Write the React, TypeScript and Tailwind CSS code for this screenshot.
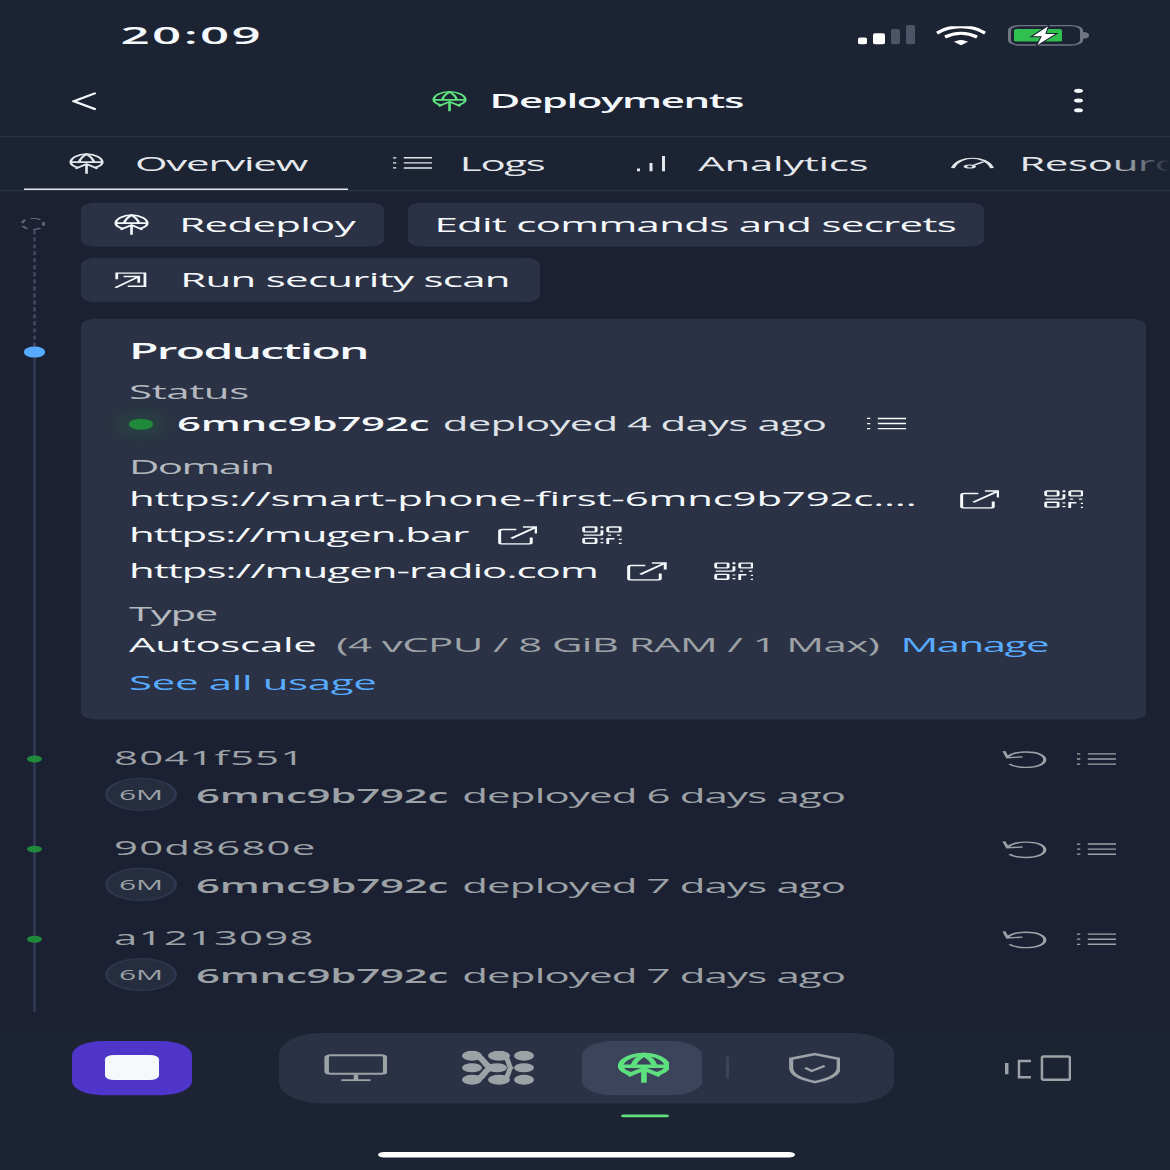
import type { ReactNode } from "react";

// The screenshot is a 390x844 phone capture squeezed into a square, so the page
// is laid out at phone size and stretched as a whole.

function Svg({ className, strokeWidth = 1.8, children }: { className: string; strokeWidth?: number; children: ReactNode }) {
  return (
    <svg viewBox="0 0 24 24" preserveAspectRatio="none" fill="none" stroke="currentColor" strokeWidth={strokeWidth} className={`shrink-0 ${className}`}>
      {children}
    </svg>
  );
}

function DeployIcon({ className, strokeWidth }: { className: string; strokeWidth?: number }) {
  return (
    <Svg className={className} strokeWidth={strokeWidth}>
      <path d="M6.500 16.500C3 15 1.200 13 1.200 10.500 1.200 6 6 1.800 12 1.800s10.800 4.200 10.800 8.700c0 2.500-1.800 4.500-5.300 6" />
      <path d="M1.500 10.500h21M7 10.500C7.500 7 9.500 4 12 1.800c2.500 2.200 4.500 5.200 5 8.700" />
      <path d="M12 23V12M4.500 17.500L12 12.500l7.500 5" />
    </Svg>
  );
}

function ListIcon({ className }: { className: string }) {
  return (
    <Svg className={className}>
      <path d="M6.500 4h17M6.500 12h17M6.500 20h17" strokeWidth={2.200} />
      <path d="M1 3v2M1 11v2M1 19v2" strokeWidth={2} />
    </Svg>
  );
}

function BarsIcon({ className }: { className: string }) {
  return (
    <Svg className={className}>
      <path d="M2 19v4M12 11v12M22 1v22" strokeWidth={2.400} />
    </Svg>
  );
}

function GaugeIcon({ className }: { className: string }) {
  return (
    <Svg className={className}>
      <path d="M1 22C3 8 8 3 12 3s9 5 11 19" strokeWidth={2.200} />
      <ellipse cx="10.500" cy="19" rx="2.500" ry="3" strokeWidth={2} />
      <path d="M13 16l5-6" strokeWidth={2} />
    </Svg>
  );
}

function ScanIcon({ className }: { className: string }) {
  return (
    <Svg className={className} strokeWidth={2}>
      <path d="M2 11V2h20.500v19H10" />
      <path d="M1 23L17 8M7 7h11v9" />
    </Svg>
  );
}

function ExternalIcon({ className }: { className: string }) {
  return (
    <Svg className={className}>
      <path d="M11 5H2.500A1.500 1.500 0 0 0 1 6.500v15A1.500 1.500 0 0 0 2.500 23h16a1.500 1.500 0 0 0 1.500-1.500V15" />
      <path d="M8 16L23 2M15 2h8v8" />
    </Svg>
  );
}

function QrIcon({ className }: { className: string }) {
  return (
    <Svg className={className} strokeWidth={1.700}>
      <rect x="1" y="2" width="7.500" height="6" rx="1" />
      <rect x="15.500" y="2" width="7.500" height="6" rx="1" />
      <rect x="1" y="16" width="7.500" height="6" rx="1" />
      <path d="M12 1v2.500M12 6v4.500c0 1-.5 1.500-1.500 1.500H1M15.500 12h2M21 12h2M12 16v1.500M12 20.500V22M15.500 23v-6.500h4M23 16.500v1.500M23 21.500V23" />
    </Svg>
  );
}

function RollbackIcon({ className }: { className: string }) {
  return (
    <Svg className={className} strokeWidth={1.700}>
      <path d="M3 9C5 4 9 2.500 13 2.500c6 0 10 4 10 9.500s-4 9.500-10 9.500c-4 0-7-1.500-9-4" />
      <path d="M1 1.500L3 9.500l8-1" />
    </Svg>
  );
}

function ShieldIcon({ className }: { className: string }) {
  return (
    <Svg className={className}>
      <path d="M12 1.500L23 5v7c0 6-5 9-11 11C6 21 1 18 1 12V5z" strokeWidth={1.900} />
      <path d="M7.500 12l3 2.500 6-4" strokeWidth={1.600} />
    </Svg>
  );
}

function MonitorIcon({ className }: { className: string }) {
  return (
    <Svg className={className}>
      <rect x="1" y="1.500" width="22" height="16" rx="1.500" strokeWidth={1.700} />
      <path d="M12 18v5M6.500 23h11" strokeWidth={1.700} />
    </Svg>
  );
}

function MeshIcon({ className }: { className: string }) {
  return (
    <svg viewBox="0 0 72 34" preserveAspectRatio="none" className={`shrink-0 ${className}`}>
      <g fill="#9da2a6">
        <ellipse cx="10" cy="5" rx="10" ry="5" />
        <ellipse cx="37" cy="5" rx="11" ry="5" />
        <ellipse cx="62" cy="5" rx="10" ry="5" />
        <ellipse cx="10" cy="17" rx="10" ry="4.500" />
        <ellipse cx="35" cy="17" rx="10" ry="4.500" />
        <ellipse cx="62" cy="17" rx="10" ry="4.500" />
        <ellipse cx="10" cy="29" rx="10" ry="5" />
        <ellipse cx="37" cy="29" rx="11" ry="5" />
        <ellipse cx="62" cy="29" rx="10" ry="5" />
      </g>
      <g fill="none" stroke="#9da2a6">
        <path d="M14 5.500C22 6 21 14 29 17 21 20 22 28 14 28.500" strokeWidth={6} />
        <path d="M41 5.500C47 6 46 14 48.500 17 46 20 47 28 41 28.500" strokeWidth={5} />
      </g>
    </svg>
  );
}

function Tab({ width, icon, label, tracking }: { width: string; icon: ReactNode; label: string; tracking: string }) {
  return (
    <div className={`flex h-full shrink-0 items-center pl-[15px] ${width}`}>
      {icon}
      <span className={`whitespace-nowrap ${tracking}`}>{label}</span>
    </div>
  );
}

function ActionButton({ width, icon, label }: { width: string; icon?: ReactNode; label: string }) {
  return (
    <div className={`flex h-[32px] items-center rounded-[5px] bg-[#2b3245] text-[14px] tracking-[-0.24px] text-[#f5f9fc] ${width} ${icon ? "pl-[11.300px]" : "pl-[8.800px]"}`}>
      {icon}
      <span className="whitespace-nowrap">{label}</span>
    </div>
  );
}

function UrlRow({ url, gap, tracking }: { url: string; gap: string; tracking: string }) {
  return (
    <div className="flex h-[26px] items-center text-[#f5f9fc]">
      <span className={`whitespace-nowrap text-[14px] ${tracking}`}>{url}</span>
      <ExternalIcon className={`h-[14px] w-[13.300px] ${gap}`} />
      <QrIcon className="ml-[15px] h-[14px] w-[13.300px]" />
    </div>
  );
}

function Deployment({ hash, age }: { hash: string; age: string }) {
  return (
    <div className="relative flex h-[65px] justify-between pt-[7px] pr-[9.700px] text-[#9da2a6]">
      <div className="absolute top-[16px] left-[-18.200px] h-[4.300px] w-[5px] rounded-full bg-[#1f8a3a]" />
      <div className="pl-[8px]">
        <div className="flex h-[20px] items-center pl-[3px] text-[14px] tracking-[0.38px]">{hash}</div>
        <div className="mt-[4.600px] flex h-[24.400px] items-center">
          <div className="flex h-full w-[24px] items-center justify-center rounded-full border border-[#2f3750] bg-[#262d3f] text-[10px]">6M</div>
          <div className="ml-[6.300px] flex text-[14px] whitespace-nowrap">
            <span className="font-semibold tracking-[-0.08px]">6mnc9b792c</span>
            <span className="ml-[4.700px] tracking-[-0.29px]">deployed {age} days ago</span>
          </div>
        </div>
      </div>
      <div className="flex h-[23px] items-center gap-[10.400px]">
        <RollbackIcon className="h-[14px] w-[14.900px]" />
        <ListIcon className="h-[11px] w-[13.300px]" />
      </div>
    </div>
  );
}

export default function App() {
  return (
    <div className="h-[1170px] w-[1170px] overflow-hidden bg-[#1c2333]">
      <div className="flex h-[844px] w-[390px] origin-top-left scale-x-[3] scale-y-[1.3863] flex-col font-['Open_Sans',sans-serif] text-[#f5f9fc]">
        {/* status bar */}
        <div className="flex h-[47.500px] shrink-0 items-center pt-[3.600px]">
          <span className="ml-[40.200px] w-[50px] text-[17px] font-semibold tracking-[0.8px]">20:09</span>
          <div className="ml-[195.800px] flex items-end gap-[2px] pb-[1px]">
            <div className="h-[5.500px] w-[3.300px] rounded-[1px] bg-white" />
            <div className="h-[8.500px] w-[3.300px] rounded-[1px] bg-white" />
            <div className="h-[11px] w-[3.300px] rounded-[1px] bg-[#4c5468]" />
            <div className="h-[14px] w-[3.300px] rounded-[1px] bg-[#4c5468]" />
          </div>
          <svg viewBox="0 0 50 20" preserveAspectRatio="none" fill="none" stroke="white" className="ml-[7.200px] h-[14px] w-[16.700px] shrink-0">
            <path d="M1 7C15-2 35-2 49 7" strokeWidth={3.500} />
            <path d="M9 11c10-5 22-5 32 0" strokeWidth={3.500} />
            <path d="M19 16l6 3 6-3c-4-2-8-2-12 0z" fill="white" strokeWidth={1} />
          </svg>
          <div className="relative ml-[6.900px] h-[14.500px] w-[25px] shrink-0 rounded-[4px] border border-[#6f7583] p-[1.500px]">
            <div className="h-full w-[15.500px] rounded-[1px] bg-[#30c04f]" />
            <svg viewBox="0 0 30 20" preserveAspectRatio="none" className="absolute top-[-1px] left-[6.500px] h-[15.500px] w-[10px]">
              <path d="M20 0L2 11h10l-5 9 21-12H17z" fill="white" stroke="#1c2333" strokeWidth={1} />
            </svg>
            <div className="absolute top-[3.500px] left-[24.500px] h-[5px] w-[1.200px] rounded-r-full bg-[#6f7583]" />
          </div>
        </div>

        {/* title bar */}
        <div className="flex h-[51px] shrink-0 items-center border-b border-[#2b3245]">
          <svg viewBox="0 0 8 14" preserveAspectRatio="none" fill="none" stroke="#f5f9fc" strokeWidth={1.300} className="ml-[24px] h-[14px] w-[8px] shrink-0">
            <path d="M8 1L.6 7 8 13" />
          </svg>
          <DeployIcon className="ml-[112px] h-[16px] w-[11.700px] text-[#5ee07f]" />
          <span className="ml-[7.500px] text-[14px] font-semibold tracking-[-0.47px] whitespace-nowrap">Deployments</span>
          <div className="ml-auto mr-[28.700px] flex flex-col items-center gap-[3.500px]">
            <div className="h-[3.600px] w-[3.200px] rounded-full bg-[#f5f9fc]" />
            <div className="h-[3.600px] w-[3.200px] rounded-full bg-[#f5f9fc]" />
            <div className="h-[3.600px] w-[3.200px] rounded-full bg-[#f5f9fc]" />
          </div>
        </div>

        {/* tabs */}
        <div className="relative flex h-[39px] shrink-0 overflow-hidden border-b border-[#2b3245] pl-[8.300px] text-[14px] text-[#e4e8ec]">
          <div className="relative h-full">
            <Tab
              width="w-[107.700px]"
              icon={<DeployIcon className="mr-[10px] h-[16px] w-[11.700px]" />}
              label="Overview"
              tracking="tracking-[-0.42px]"
            />
            <div className="absolute right-0 bottom-0 left-0 h-[1px] bg-[#f5f9fc]" />
          </div>
          <Tab
            width="w-[81px]"
            icon={<ListIcon className="mr-[9px] h-[11px] w-[13.300px]" />}
            label="Logs"
            tracking="tracking-[-0.45px]"
          />
          <Tab
            width="w-[105.300px]"
            icon={<BarsIcon className="mr-[10.800px] h-[12px] w-[10px]" />}
            label="Analytics"
            tracking="tracking-[-0.12px]"
          />
          <Tab
            width="w-[120px]"
            icon={<GaugeIcon className="mr-[8.200px] h-[9px] w-[14.300px]" />}
            label="Resources"
            tracking="tracking-[-0.12px]"
          />
          <div className="absolute top-0 right-0 bottom-0 w-[22px] bg-gradient-to-r from-transparent to-[#1c2333]" />
        </div>

        {/* timeline and deployments */}
        <div className="flex h-[607px] shrink-0 bg-[#1b2132]">
          <div className="flex w-[27px] shrink-0 flex-col items-center pt-[19.500px] pr-[4.400px]">
            <div className="h-[8.500px] w-[8.300px] shrink-0 rounded-full border border-dashed border-[#5a6378]" />
            <div className="h-[84px] w-0 shrink-0 border-l border-dashed border-[#3c445c]" />
            <div className="h-[8px] w-[7.300px] shrink-0 rounded-full bg-[#57abff]" />
            <div className="h-[472px] w-[1px] shrink-0 bg-[#2f3750]" />
          </div>

          <div className="relative w-[355px] shrink-0 pt-[8.400px]">
            <div className="flex flex-wrap gap-[8px]">
              <ActionButton
                width="w-[101px]"
                icon={<DeployIcon className="mr-[9.800px] h-[16px] w-[11.700px]" />}
                label="Redeploy"
              />
              <ActionButton width="w-[192px]" label="Edit commands and secrets" />
              <ActionButton
                width="w-[153px]"
                icon={<ScanIcon className="mr-[10.800px] h-[12px] w-[11px]" />}
                label="Run security scan"
              />
            </div>

            <div className="mt-[12px] h-[289.500px] rounded-[5px] bg-[#2b3245] pt-[13px] pl-[16px]">
              <div className="flex h-[20px] items-center text-[16px] font-semibold tracking-[-0.57px]">Production</div>
              <div className="mt-[10px] flex h-[20px] items-center text-[14px] tracking-[-0.12px] text-[#b4b9bf]">Status</div>
              <div className="mt-[3px] flex h-[20px] items-center text-[14px]">
                <div className="h-[8.600px] w-[8px] shrink-0 rounded-full bg-[#1f8a3a] shadow-[0_0_6px_5px_rgba(31,138,58,0.18)]" />
                <span className="ml-[8px] font-semibold tracking-[-0.08px] whitespace-nowrap">6mnc9b792c</span>
                <span className="ml-[4.500px] tracking-[-0.28px] whitespace-nowrap text-[#dfe3e7]">deployed 4 days ago</span>
                <ListIcon className="ml-[14px] h-[11px] w-[13.300px]" />
              </div>
              <div className="mt-[11px] flex h-[20px] items-center text-[14px] tracking-[-0.55px] text-[#b4b9bf]">Domain</div>
              <UrlRow url="https://smart-phone-first-6mnc9b792c...." gap="ml-[14.400px]" tracking="tracking-[-0.07px]" />
              <UrlRow url="https://mugen.bar" gap="ml-[9.800px]" tracking="tracking-[-0.35px]" />
              <UrlRow url="https://mugen-radio.com" gap="ml-[10px]" tracking="tracking-[-0.32px]" />
              <div className="mt-[8px] flex h-[20px] items-center text-[14px] tracking-[-0.45px] text-[#b4b9bf]">Type</div>
              <div className="mt-[2px] flex h-[20px] items-center text-[14px] whitespace-nowrap">
                <span className="tracking-[-0.1px]">Autoscale</span>
                <span className="ml-[6.600px] tracking-[-0.2px] text-[#9da2a6]">(4 vCPU / 8 GiB RAM / 1 Max)</span>
                <span className="ml-[7px] tracking-[-0.5px] text-[#57abff]">Manage</span>
              </div>
              <div className="mt-[8px] flex h-[20px] items-center text-[14px] tracking-[-0.12px] text-[#57abff]">See all usage</div>
            </div>

            <div className="mt-[10px]">
              <Deployment hash="8041f551" age="6" />
              <Deployment hash="90d8680e" age="7" />
              <Deployment hash="a1213098" age="7" />
            </div>
          </div>
        </div>

        {/* bottom dock */}
        <div className="flex h-[51.600px] shrink-0 items-center">
          <div className="ml-[24px] flex h-[39.600px] w-[40px] items-center justify-center rounded-[10px] bg-[#4f35c9]">
            <div className="h-[18px] w-[18px] rounded-[3px] bg-[#f5f9fc]" />
          </div>
          <div className="ml-[28.800px] flex h-full w-[205px] items-center rounded-[15px] bg-[#2b3245] pl-[15.300px] text-[#9da2a6]">
            <MonitorIcon className="h-[20px] w-[21.300px]" />
            <MeshIcon className="ml-[25px] h-[24.500px] w-[24px]" />
            <div className="ml-[16px] flex h-[39.600px] w-[40px] items-center justify-center rounded-[10px] bg-[#3c445c]">
              <DeployIcon className="h-[23px] w-[17.300px] text-[#5ee07f]" strokeWidth={2.600} />
            </div>
            <div className="ml-[8px] h-[16px] w-[1px] bg-[#3c445c]" />
            <ShieldIcon className="ml-[19.600px] h-[22.500px] w-[17.300px]" />
          </div>
          <svg viewBox="0 0 67 26" preserveAspectRatio="none" fill="none" stroke="#9da2a6" strokeWidth={2.500} className="ml-[37.200px] h-[19px] w-[22.300px] shrink-0">
            <path d="M1.500 8v11" strokeWidth={4} />
            <path d="M26 6H14v16h12" />
            <rect x="37" y="1.500" width="28" height="23" rx="1.500" />
          </svg>
        </div>

        <div className="ml-[206.700px] mt-[8.400px] h-[2px] w-[16px] rounded-full bg-[#5ee07f]" />
        <div className="ml-[125.700px] mt-[24.100px] h-[4.800px] w-[139px] rounded-full bg-white" />
      </div>
    </div>
  );
}
